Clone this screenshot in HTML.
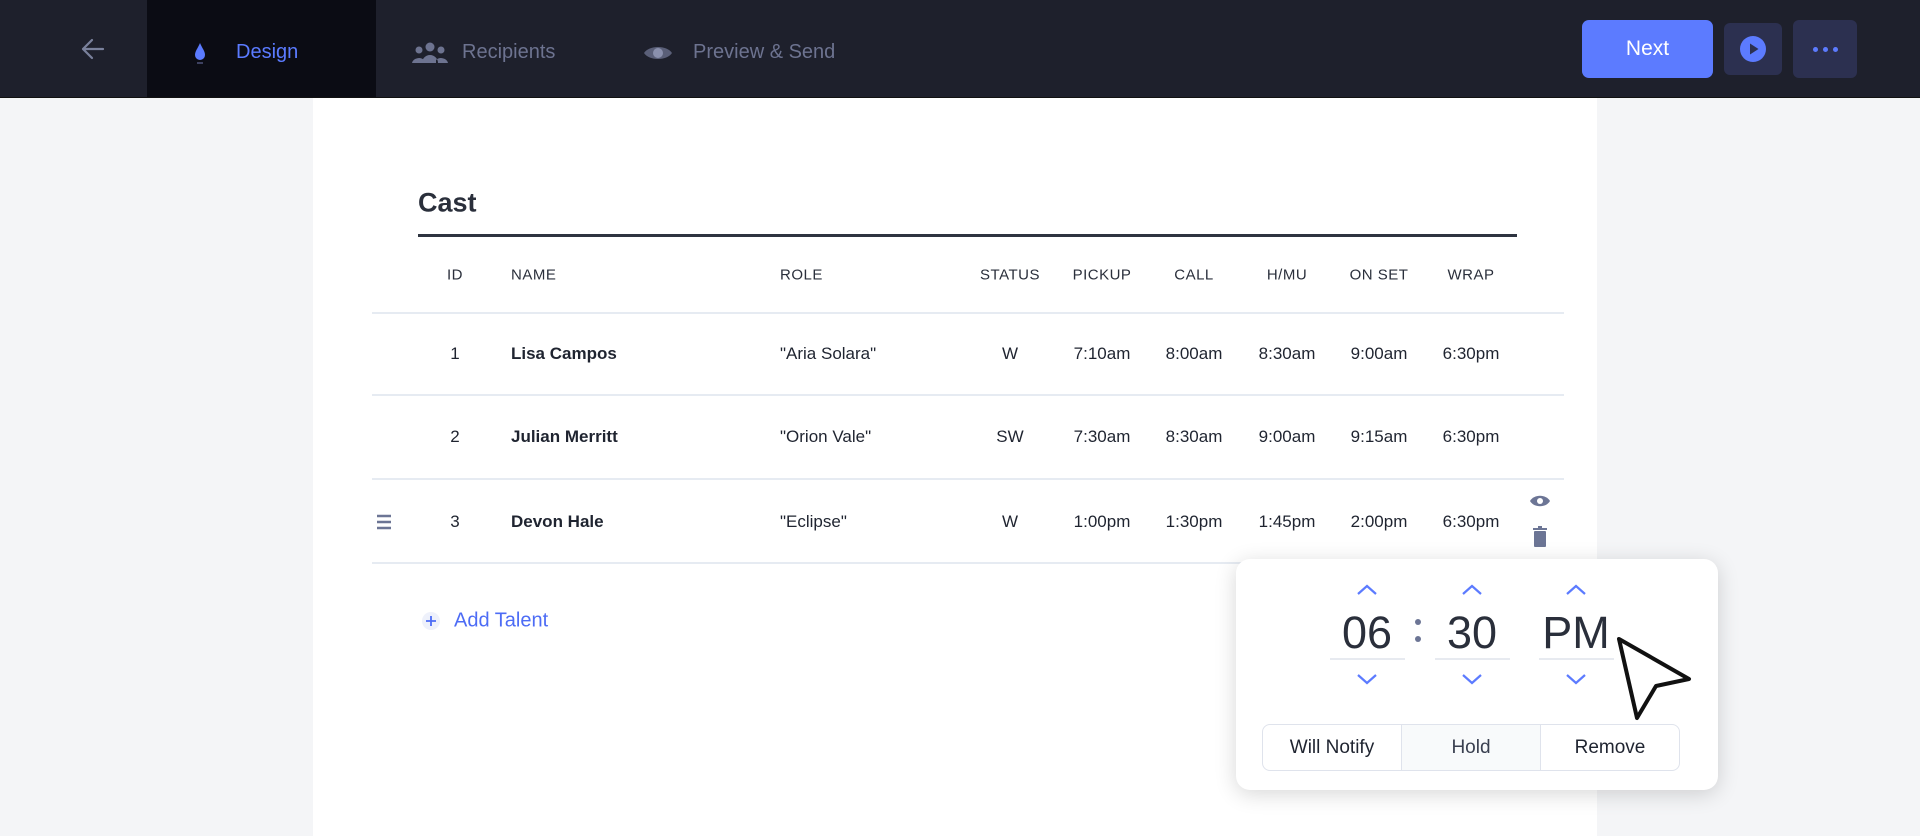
<!DOCTYPE html>
<html><head><meta charset="utf-8"><style>
*{margin:0;padding:0;box-sizing:border-box}
body{width:1920px;height:836px;overflow:hidden;background:#f4f5f7;font-family:"Liberation Sans",sans-serif;color:#1f2430;position:relative}
.hdr{position:absolute;left:0;top:0;width:1920px;height:98px;background:#1e202c;border-bottom:1px solid #111}
.tab{position:absolute;top:4px;height:97px;display:flex;align-items:center;font-size:20px;color:#6d7390}
.ab{position:absolute}
.panel{position:absolute;left:313px;top:98px;width:1284px;height:738px;background:#fff}
.t{position:absolute;font-size:17px;transform:translateY(-50%);white-space:nowrap}
.c{transform:translate(-50%,-50%)}
.h{font-size:15px;letter-spacing:.5px;color:#2a2f3b}
.line{position:absolute;height:2px;background:#e6ebf2}
.b{font-weight:bold}
</style></head><body>
<div class="hdr">
 <div class="ab" style="left:147px;top:0;width:229px;height:97px;background:#0b0c14"></div>
 <svg class="ab" style="left:80px;top:37px" width="26" height="24" viewBox="0 0 26 24"><path d="M12 3 3 12l9 9M3 12h20" stroke="#7a819c" stroke-width="2.2" fill="none" stroke-linecap="round" stroke-linejoin="round"/></svg>
 <div class="tab" style="left:147px;width:229px"><svg style="margin-left:46px" width="14" height="24" viewBox="0 0 14 24"><path d="M7 2C5 7 2 10 2 14a5 5 0 0 0 10 0C12 10 9 7 7 2z" fill="#5b7bff"/><rect x="4" y="21" width="6" height="2" fill="#3d4160"/></svg><span style="margin-left:29px;color:#5b7bff">Design</span></div>
 <div class="tab" style="left:412px"><svg width="36" height="24" viewBox="0 0 36 24"><circle cx="18" cy="6" r="4.5" fill="#6d7390"/><circle cx="7" cy="9" r="3.5" fill="#6d7390"/><circle cx="29" cy="9" r="3.5" fill="#6d7390"/><path d="M10 22a8 8 0 0 1 16 0z M0 22a7 6 0 0 1 12-3v3z M36 22a7 6 0 0 0-12-3v3z" fill="#6d7390"/></svg><span style="margin-left:14px">Recipients</span></div>
 <div class="tab" style="left:643px"><svg width="30" height="22" viewBox="0 0 30 22"><path d="M1 11C6 3 24 3 29 11 24 19 6 19 1 11z" fill="#5a5f78"/><circle cx="15" cy="11" r="5" fill="#8a90ad"/></svg><span style="margin-left:20px">Preview &amp; Send</span></div>
 <div class="ab" style="left:1582px;top:20px;width:131px;height:58px;background:#5c7bff;border-radius:7px;color:#fff;font-size:21px;display:flex;align-items:center;justify-content:center">Next</div>
 <div class="ab" style="left:1724px;top:23px;width:58px;height:52px;background:#2c3050;border-radius:6px;display:flex;align-items:center;justify-content:center"><svg width="26" height="26" viewBox="0 0 26 26"><circle cx="13" cy="13" r="13" fill="#5c7bff"/><path d="M10 7.5v11l8.5-5.5z" fill="#2c3050"/></svg></div>
 <div class="ab" style="left:1793px;top:20px;width:64px;height:58px;background:#2c3050;border-radius:6px;display:flex;align-items:center;justify-content:center;gap:5px"><i style="width:5px;height:5px;border-radius:50%;background:#5c7bff"></i><i style="width:5px;height:5px;border-radius:50%;background:#5c7bff"></i><i style="width:5px;height:5px;border-radius:50%;background:#5c7bff"></i></div>
</div>
<div class="panel"></div>
<div class="t b" style="left:418px;top:203px;font-size:27px;color:#2a2f3b">Cast</div>
<div class="ab" style="left:418px;top:234px;width:1099px;height:3px;background:#2e3440"></div>
<div class="t h c" style="left:455px;top:275px">ID</div>
<div class="t h" style="left:511px;top:275px">NAME</div>
<div class="t h" style="left:780px;top:275px">ROLE</div>
<div class="t h c" style="left:1010px;top:275px">STATUS</div>
<div class="t h c" style="left:1102px;top:275px">PICKUP</div>
<div class="t h c" style="left:1194px;top:275px">CALL</div>
<div class="t h c" style="left:1287px;top:275px">H/MU</div>
<div class="t h c" style="left:1379px;top:275px">ON SET</div>
<div class="t h c" style="left:1471px;top:275px">WRAP</div>
<div class="line" style="left:372px;top:312px;width:1192px"></div>
<div class="line" style="left:372px;top:394px;width:1192px"></div>
<div class="line" style="left:372px;top:478px;width:1192px"></div>
<div class="line" style="left:372px;top:562px;width:1192px"></div>

<div class="t c" style="left:455px;top:354px">1</div><div class="t b" style="left:511px;top:354px">Lisa Campos</div><div class="t" style="left:780px;top:354px">"Aria Solara"</div><div class="t c" style="left:1010px;top:354px">W</div><div class="t c" style="left:1102px;top:354px">7:10am</div><div class="t c" style="left:1194px;top:354px">8:00am</div><div class="t c" style="left:1287px;top:354px">8:30am</div><div class="t c" style="left:1379px;top:354px">9:00am</div><div class="t c" style="left:1471px;top:354px">6:30pm</div>
<div class="t c" style="left:455px;top:437px">2</div><div class="t b" style="left:511px;top:437px">Julian Merritt</div><div class="t" style="left:780px;top:437px">"Orion Vale"</div><div class="t c" style="left:1010px;top:437px">SW</div><div class="t c" style="left:1102px;top:437px">7:30am</div><div class="t c" style="left:1194px;top:437px">8:30am</div><div class="t c" style="left:1287px;top:437px">9:00am</div><div class="t c" style="left:1379px;top:437px">9:15am</div><div class="t c" style="left:1471px;top:437px">6:30pm</div>
<div class="t c" style="left:455px;top:522px">3</div><div class="t b" style="left:511px;top:522px">Devon Hale</div><div class="t" style="left:780px;top:522px">"Eclipse"</div><div class="t c" style="left:1010px;top:522px">W</div><div class="t c" style="left:1102px;top:522px">1:00pm</div><div class="t c" style="left:1194px;top:522px">1:30pm</div><div class="t c" style="left:1287px;top:522px">1:45pm</div><div class="t c" style="left:1379px;top:522px">2:00pm</div><div class="t c" style="left:1471px;top:522px">6:30pm</div>
<svg class="ab" style="left:376px;top:514px" width="16" height="16"><path d="M1 2h14M1 8h14M1 14h14" stroke="#6c7595" stroke-width="2.5"/></svg>
<svg class="ab" style="left:1530px;top:494px" width="20" height="14" viewBox="0 0 20 14"><path d="M0 7C4 0 16 0 20 7 16 14 4 14 0 7z" fill="#6c7595"/><circle cx="10" cy="7" r="3" fill="#fff"/></svg>
<svg class="ab" style="left:1533px;top:526px" width="14" height="21" viewBox="0 0 14 21"><rect x="0" y="2" width="14" height="2" fill="#6c7595"/><rect x="5" y="0" width="4" height="2" fill="#6c7595"/><rect x="1" y="5" width="12" height="16" rx="1" fill="#6c7595"/></svg>
<svg class="ab" style="left:422px;top:612px" width="18" height="18"><circle cx="9" cy="9" r="9" fill="#eef1fb"/><path d="M9 4v10M4 9h10" stroke="#4d6cf5" stroke-width="1.8"/></svg>
<div class="t" style="left:454px;top:621px;font-size:20px;color:#4d6cf5">Add Talent</div>

<div class="ab" style="left:1236px;top:559px;width:482px;height:231px;background:#fff;border-radius:14px;box-shadow:0 4px 22px rgba(0,0,0,.16)"></div>
<svg class="ab" style="left:1236px;top:559px" width="482" height="231">
 <g stroke="#5c7bff" stroke-width="2.2" fill="none">
  <path d="M122 35l9-8 9 8M227 35l9-8 9 8M331 35l9-8 9 8M122 116l9 8 9-8M227 116l9 8 9-8M331 116l9 8 9-8"/>
 </g>
 <g stroke="#dfe3ec" stroke-width="1.5"><path d="M94 100h75M199 100h75M303 100h75"/></g>
 <circle cx="182" cy="63" r="3" fill="#6c7595"/><circle cx="182" cy="80" r="3" fill="#6c7595"/>
</svg>
<div class="t c" style="left:1367px;top:633px;font-size:45px;color:#2a2f3b">06</div>
<div class="t c" style="left:1472px;top:633px;font-size:45px;color:#2a2f3b">30</div>
<div class="t c" style="left:1576px;top:633px;font-size:45px;color:#2a2f3b">PM</div>
<div class="ab" style="left:1262px;top:724px;width:418px;height:47px;border:1.5px solid #dfe3ec;border-radius:8px;display:flex;font-size:19px">
 <div style="flex:1;display:flex;align-items:center;justify-content:center">Will Notify</div>
 <div style="flex:1;display:flex;align-items:center;justify-content:center;background:#f8fafb;border-left:1.5px solid #dfe3ec;border-right:1.5px solid #dfe3ec;color:#3a4050">Hold</div>
 <div style="flex:1;display:flex;align-items:center;justify-content:center">Remove</div>
</div>
<svg class="ab" style="left:1610px;top:630px" width="90" height="100" viewBox="0 0 90 100"><path d="M9 9 79 49 46 56 27 88z" fill="#fff" stroke="#111" stroke-width="4" stroke-linejoin="round"/></svg>
</body></html>
